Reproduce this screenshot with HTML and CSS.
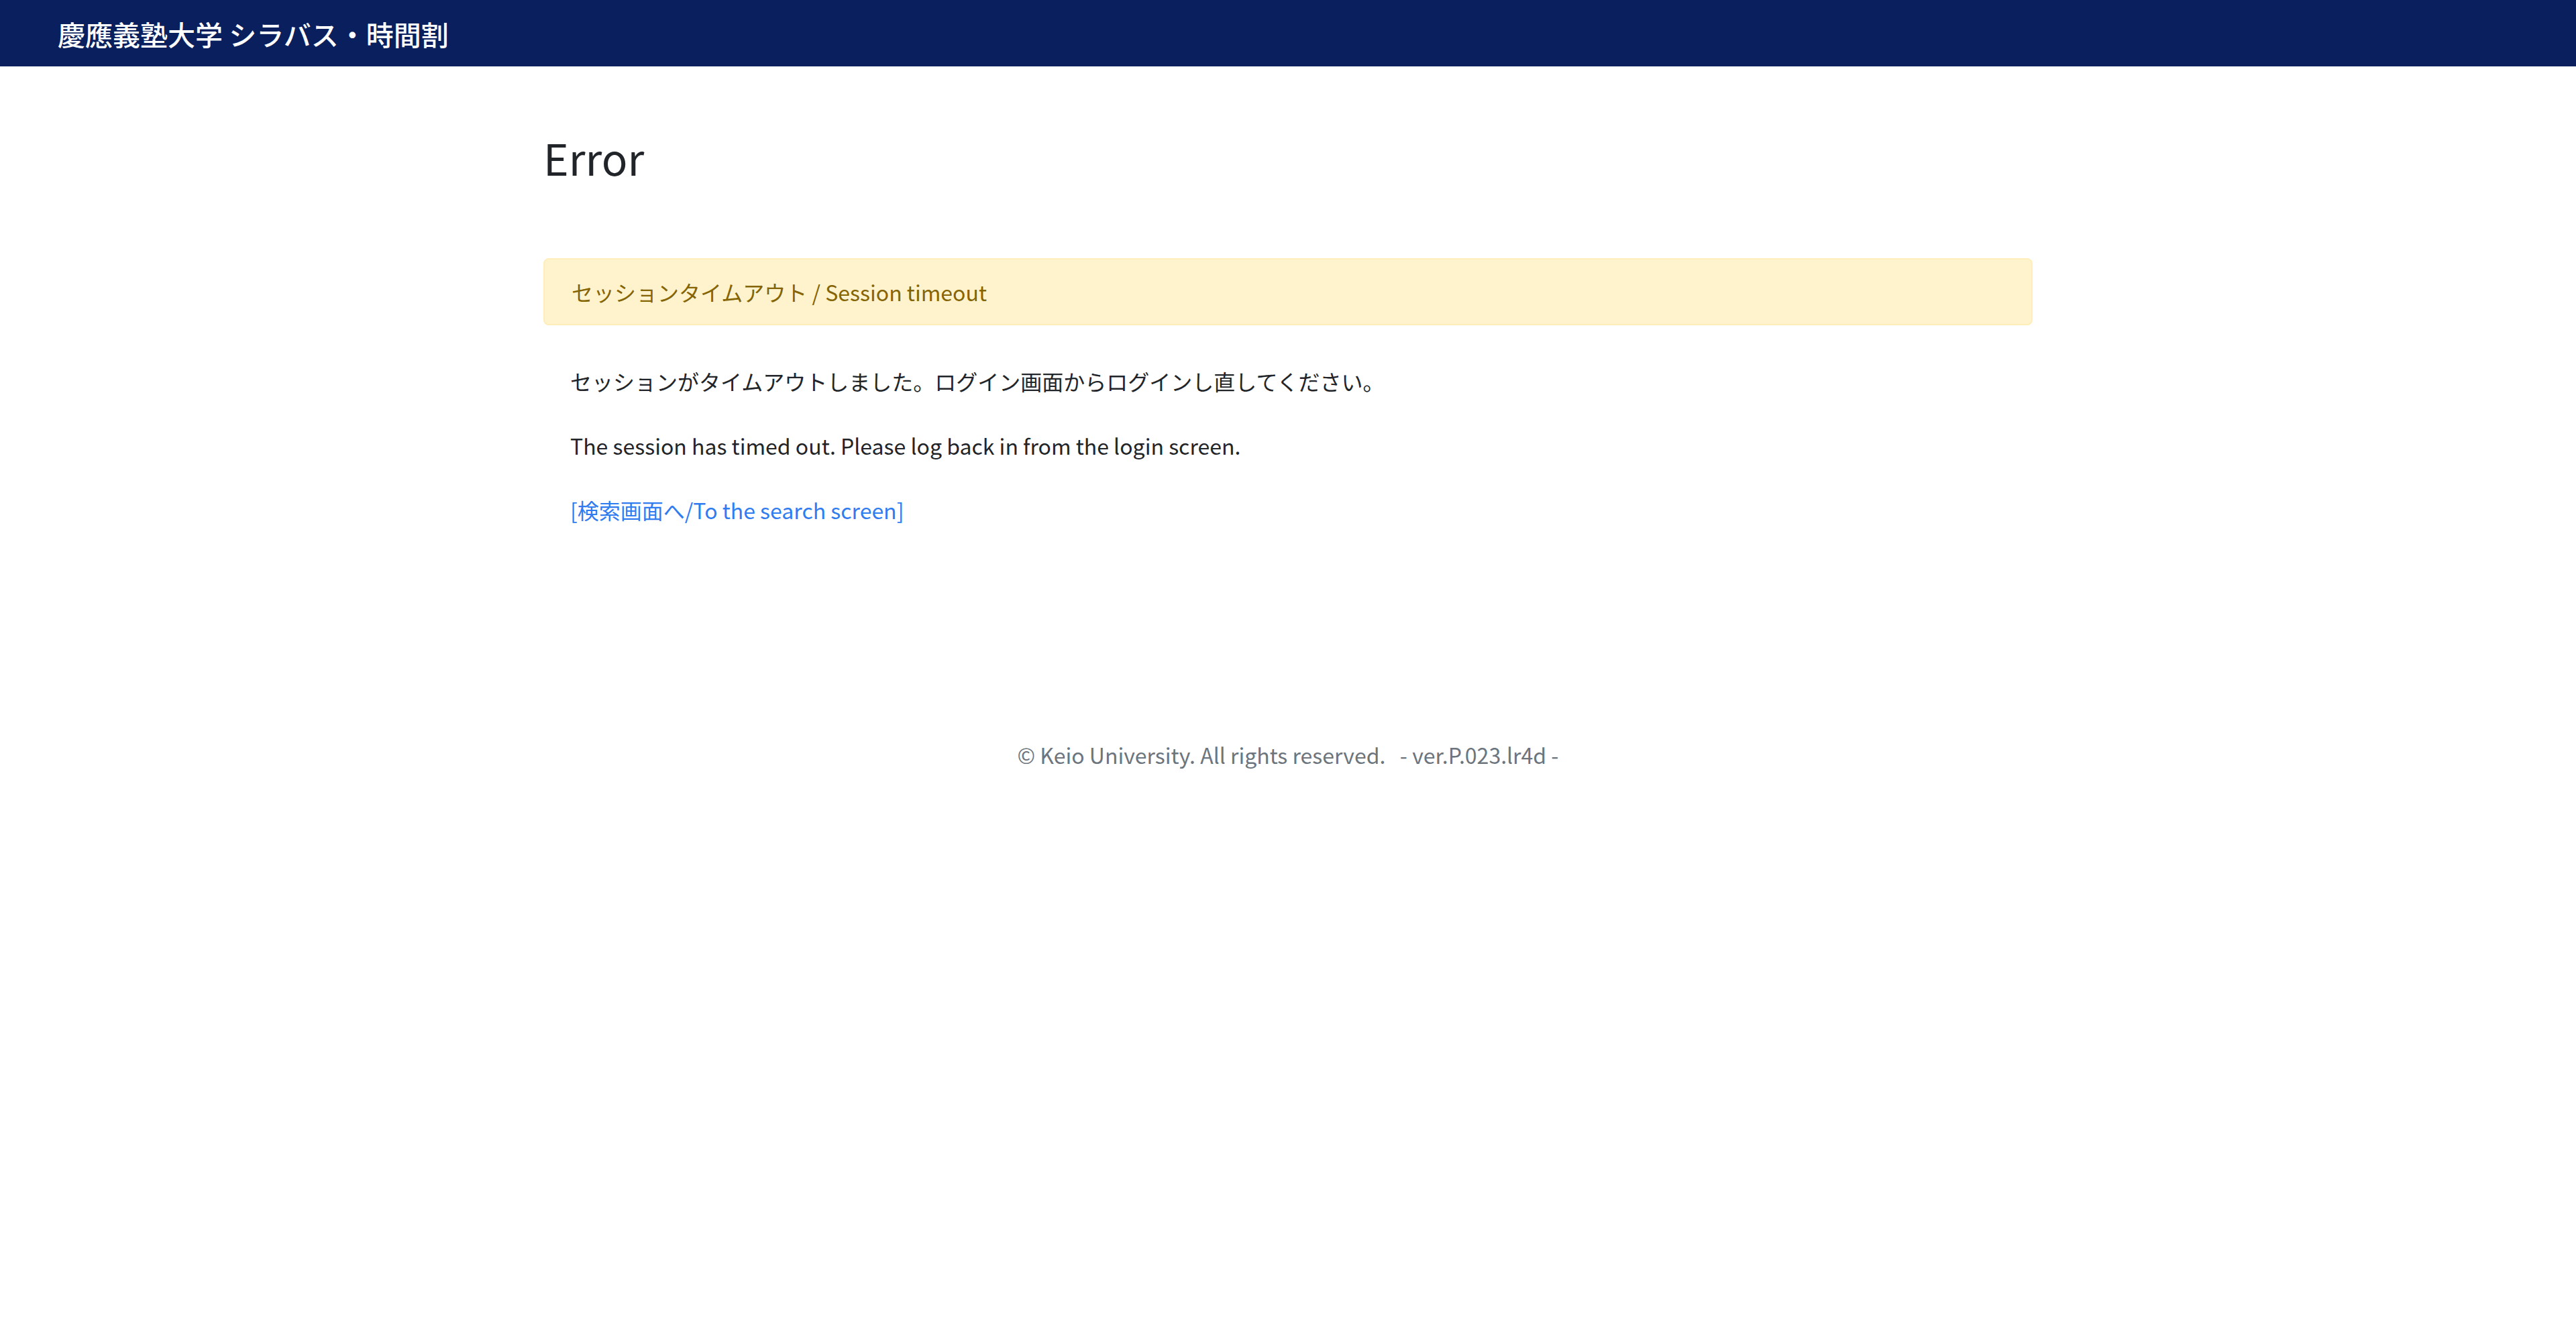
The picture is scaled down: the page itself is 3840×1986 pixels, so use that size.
FILE: index.html
```html
<!DOCTYPE html>
<html lang="ja">
<head>
<meta charset="utf-8">
<title>Error</title>
<link rel="stylesheet" href="styles.css">
</head>
<body>
<header class="navbar">
  <span class="brand">慶應義塾大学 シラバス・時間割</span>
</header>
<main class="container">
  <h1 class="title">Error</h1>
  <div class="alert">セッションタイムアウト / Session timeout</div>
  <div class="message">
    <p>セッションがタイムアウトしました。ログイン画面からログインし直してください。</p>
    <p>The session has timed out. Please log back in from the login screen.</p>
    <p><a class="link" href="#">[検索画面へ/To the search screen]</a></p>
  </div>
</main>
<footer class="footer">© Keio University. All rights reserved.&nbsp;&nbsp; - ver.P.023.lr4d -</footer>
</body>
</html>
```
FILE: styles.css
```css
html, body {
  margin: 0;
  padding: 0;
  background: #fff;
}
body {
  font-family: "Noto Sans CJK JP", "Noto Sans", sans-serif;
  font-size: 32px;
  line-height: 48px;
  color: #212529;
}
.navbar {
  height: 99px;
  background: #0a1f5d;
  display: flex;
  align-items: center;
  padding-left: 86px;
  box-sizing: border-box;
}
.brand {
  color: #fff;
  font-size: 41px;
  line-height: 60px;
  font-weight: 500;
}
.container {
  width: 2220px;
  margin: 0 auto;
}
.title {
  margin: 97px 0 0;
  font-size: 64px;
  line-height: 1.2;
  font-weight: 400;
  color: #212529;
}
.alert {
  margin-top: 112px;
  padding: 24px 40px;
  background: #fff3cd;
  border: 2px solid #ffeeba;
  border-radius: 8px;
  color: #856404;
}
.message {
  padding: 59px 40px 0;
}
.message p {
  margin: 0 0 48px;
}
.message p:last-child {
  margin-bottom: 0;
}
.link {
  color: #2f7bf0;
  text-decoration: none;
}
.footer {
  margin-top: 317px;
  text-align: center;
  font-size: 32px;
  line-height: 48px;
  color: #6c757d;
  white-space: pre;
}
```
